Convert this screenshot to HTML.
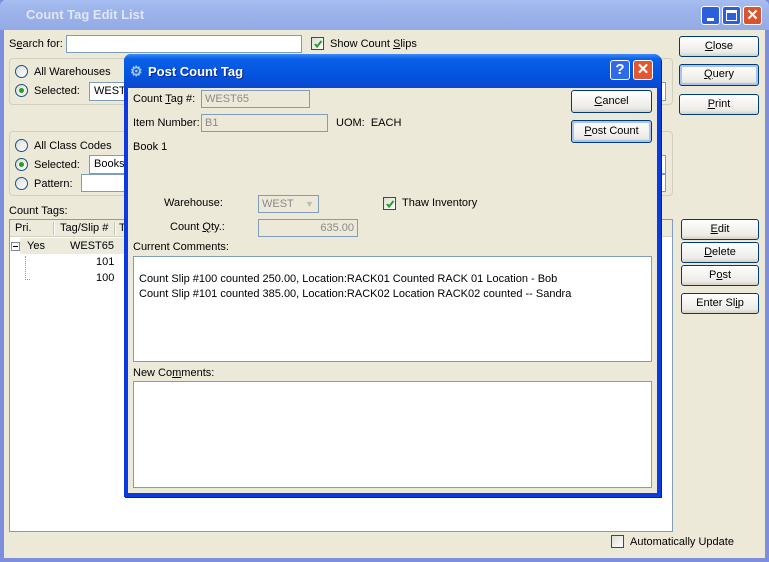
<!DOCTYPE html>
<html><head><meta charset="utf-8"><style>
*{box-sizing:border-box;margin:0;padding:0}
body{width:769px;height:562px;overflow:hidden;background:#ece9d8;font-family:"Liberation Sans",sans-serif;font-size:11px;color:#000;position:relative}
.a{position:absolute;white-space:nowrap}
.t{position:absolute;white-space:nowrap;line-height:13px}
.inp{position:absolute;background:#fff;border:1px solid #7f9db9}
.dis{background:#ece9d8;color:#8a8a8a;padding:2px 3px;line-height:12px}
.btn{position:absolute;border:1px solid #003c74;border-radius:3px;background:linear-gradient(#fff,#ecebe6 80%,#d6d0c5);text-align:center;line-height:19px}
.btnf{box-shadow:inset 0 0 0 2px #a9c4f4}
.rad{position:absolute;width:13px;height:13px;border-radius:50%;border:1px solid #1c5180;background:linear-gradient(135deg,#dcdcd5,#fff)}
.rad.on:after{content:"";position:absolute;left:3px;top:3px;width:5px;height:5px;border-radius:50%;background:#21a121}
.chk{position:absolute;width:13px;height:13px;border:1px solid #1c5180;background:linear-gradient(135deg,#dcdcd5,#fff)}
.chk svg{position:absolute;left:1px;top:1px}
.grp{position:absolute;border:1px solid #d0d0bf;border-radius:4px}
u{text-decoration:underline}
</style></head><body>
<div class="a" style="left:0;top:0;width:769px;height:562px;border:4px solid #7d8fdc;border-top:none"></div>
<div class="a" style="left:0;top:0;width:769px;height:30px;background:linear-gradient(#a5bdf0,#9cb3ea 40%,#94aae6);border-radius:6px 6px 0 0"></div>
<div class="a" style="left:26px;top:7px;font-weight:bold;font-size:13px;color:#dfe6f7">Count Tag Edit List</div>
<div class="a" style="left:701px;top:6px;width:19px;height:19px;border:1px solid #fff;border-radius:3px;background:#2c5fdb"><div class="a" style="left:5px;top:11px;width:7px;height:3px;background:#fff"></div></div>
<div class="a" style="left:722px;top:6px;width:19px;height:19px;border:1px solid #fff;border-radius:3px;background:#2c5fdb"><div class="a" style="left:3px;top:3px;width:11px;height:11px;border:1px solid #fff;border-top-width:3px"></div></div>
<div class="a" style="left:743px;top:6px;width:19px;height:19px;border:1px solid #fff;border-radius:3px;background:#d9532f;color:#fff;font-weight:bold;font-size:15px;text-align:center;line-height:17px">✕</div>

<div class="t" style="left:9px;top:38px">S<u>e</u>arch for:</div>
<div class="inp" style="left:66px;top:35px;width:236px;height:18px"></div>
<div class="chk" style="left:311px;top:37px"><svg width="10" height="10"><path d="M2 5 L4 7.5 L8.5 2" stroke="#21a121" stroke-width="2" fill="none"/></svg></div>
<div class="t" style="left:330px;top:38px">Show Count <u>S</u>lips</div>

<div class="grp" style="left:9px;top:58px;width:664px;height:47px"></div>
<div class="rad" style="left:15px;top:65px"></div><div class="t" style="left:34px;top:66px">All Warehouses</div>
<div class="rad on" style="left:15px;top:84px"></div><div class="t" style="left:34px;top:85px">Selected:</div>
<div class="inp" style="left:89px;top:82px;width:577px;height:19px;padding:2px 4px;line-height:13px">WEST</div>

<div class="grp" style="left:9px;top:131px;width:664px;height:65px"></div>
<div class="rad" style="left:15px;top:139px"></div><div class="t" style="left:34px;top:140px">All Class Codes</div>
<div class="rad on" style="left:15px;top:158px"></div><div class="t" style="left:34px;top:159px">Selected:</div>
<div class="inp" style="left:89px;top:155px;width:577px;height:19px;padding:2px 4px;line-height:13px">Books</div>
<div class="rad" style="left:15px;top:177px"></div><div class="t" style="left:34px;top:178px">Pattern:</div>
<div class="inp" style="left:81px;top:174px;width:585px;height:18px"></div>

<div class="btn" style="left:679px;top:36px;width:80px;height:21px"><u>C</u>lose</div>
<div class="btn btnf" style="left:679px;top:64px;width:80px;height:22px"><u>Q</u>uery</div>
<div class="btn" style="left:679px;top:94px;width:80px;height:21px"><u>P</u>rint</div>

<div class="t" style="left:9px;top:205px">Count Tags:</div>
<div class="inp" style="left:9px;top:219px;width:664px;height:313px"></div>
<div class="a" style="left:10px;top:220px;width:662px;height:17px;background:#ebeadb;border-bottom:1px solid #d6d3c4"></div>
<div class="t" style="left:15px;top:222px">Pri.</div>
<div class="a" style="left:53px;top:222px;width:2px;height:13px;border-left:1px solid #c7c5b2;border-right:1px solid #fff"></div>
<div class="t" style="left:60px;top:222px">Tag/Slip #</div>
<div class="a" style="left:114px;top:222px;width:2px;height:13px;border-left:1px solid #c7c5b2;border-right:1px solid #fff"></div>
<div class="t" style="left:119px;top:222px">T</div>
<div class="a" style="left:20px;top:238px;width:104px;height:16px;background:#ebeadb"></div>
<div class="a" style="left:11px;top:242px;width:9px;height:9px;border:1px solid #7a8a99;background:#fff"><div class="a" style="left:1px;top:3px;width:5px;height:1px;background:#000"></div></div>
<div class="t" style="left:27px;top:240px">Yes</div>
<div class="t" style="left:70px;top:240px">WEST65</div>
<div class="a" style="left:25px;top:256px;width:5px;height:24px;border-left:1px dotted #999;border-bottom:1px dotted #999"></div>
<div class="t" style="left:96px;top:256px">101</div>
<div class="t" style="left:96px;top:272px">100</div>

<div class="btn" style="left:681px;top:219px;width:78px;height:21px"><u>E</u>dit</div>
<div class="btn" style="left:681px;top:242px;width:78px;height:21px"><u>D</u>elete</div>
<div class="btn" style="left:681px;top:265px;width:78px;height:21px">P<u>o</u>st</div>
<div class="btn" style="left:681px;top:293px;width:78px;height:21px">Enter Sl<u>i</u>p</div>

<div class="chk" style="left:611px;top:535px"></div>
<div class="t" style="left:630px;top:536px">Automatically Update</div>

<div class="a" style="left:124px;top:54px;width:537px;height:443px;background:#ece9d8;border:4px solid #0b3be0;border-top:none;border-radius:7px 7px 0 0;box-shadow:1px 1px 0 #001ea0"></div>
<div class="a" style="left:124px;top:54px;width:537px;height:34px;border-radius:7px 7px 0 0;background:linear-gradient(#3d8af7,#0a5fe8 15%,#0354e0 60%,#0b47cf)"></div>
<div class="a" style="left:130px;top:63px;color:#9ec4e8;font-size:14px;font-weight:bold">⚙</div>
<div class="a" style="left:148px;top:64px;font-weight:bold;font-size:13px;color:#fff;text-shadow:1px 1px #0a2a8a">Post Count Tag</div>
<div class="a" style="left:610px;top:60px;width:20px;height:20px;border:1px solid #fff;border-radius:3px;background:#2f6be8;color:#fff;font-weight:bold;font-size:15px;text-align:center;line-height:18px">?</div>
<div class="a" style="left:633px;top:60px;width:20px;height:20px;border:1px solid #fff;border-radius:3px;background:#e0582f;color:#fff;font-weight:bold;font-size:15px;text-align:center;line-height:18px">✕</div>

<div class="t" style="left:133px;top:93px">Count <u>T</u>ag #:</div>
<div class="inp dis" style="left:201px;top:90px;width:109px;height:18px">WEST65</div>
<div class="t" style="left:133px;top:117px">Item Number:</div>
<div class="inp dis" style="left:201px;top:114px;width:127px;height:18px">B1</div>
<div class="t" style="left:336px;top:117px">UOM:&nbsp; EACH</div>
<div class="t" style="left:133px;top:141px">Book 1</div>
<div class="btn" style="left:571px;top:90px;width:81px;height:23px;line-height:21px"><u>C</u>ancel</div>
<div class="btn btnf" style="left:571px;top:120px;width:81px;height:23px;line-height:21px"><u>P</u>ost Count</div>

<div class="t" style="left:164px;top:197px">Warehouse:</div>
<div class="inp dis" style="left:258px;top:195px;width:61px;height:18px">WEST</div>
<div class="a" style="left:302px;top:197px;width:15px;height:14px;color:#bbb;font-size:9px;text-align:center;line-height:14px">▼</div>
<div class="chk" style="left:383px;top:197px"><svg width="10" height="10"><path d="M2 5 L4 7.5 L8.5 2" stroke="#21a121" stroke-width="2" fill="none"/></svg></div>
<div class="t" style="left:402px;top:197px">Thaw Inventory</div>

<div class="t" style="left:170px;top:221px">Count <u>Q</u>ty.:</div>
<div class="inp dis" style="left:258px;top:219px;width:100px;height:18px;text-align:right">635.00</div>

<div class="t" style="left:133px;top:241px">Current Comments:</div>
<div class="inp" style="left:133px;top:256px;width:519px;height:106px"></div>
<div class="t" style="left:139px;top:273px">Count Slip #100 counted 250.00, Location:RACK01 Counted RACK 01 Location - Bob</div>
<div class="t" style="left:139px;top:288px">Count Slip #101 counted 385.00, Location:RACK02 Location RACK02 counted -- Sandra</div>

<div class="t" style="left:133px;top:367px">New Co<u>m</u>ments:</div>
<div class="inp" style="left:133px;top:381px;width:519px;height:107px"></div>
</body></html>
